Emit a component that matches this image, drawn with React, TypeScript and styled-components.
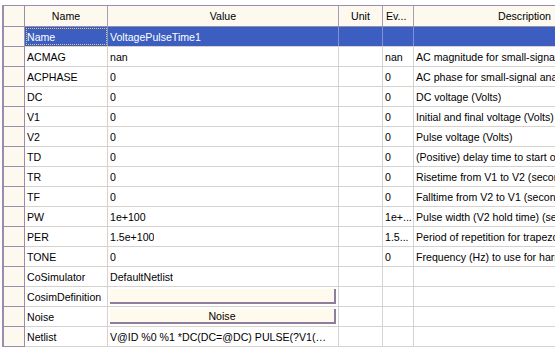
import React from 'react';
import styled, { createGlobalStyle } from 'styled-components';

const GlobalStyle = createGlobalStyle`
  html, body {
    margin: 0;
    padding: 0;
    background: #ffffff;
    overflow: hidden;
  }
  body {
    font-family: "Liberation Sans", Arial, sans-serif;
    font-size: 10.6px;
    color: #000;
  }
`;

const COLS = [83, 231, 44, 31, 222];

const StyledPage = styled.div`
  width: 555px;
  height: 356px;
  overflow: hidden;
  padding: 5px 0 0 2px;
  box-sizing: border-box;
`;

const StyledGrid = styled.div`
  border-top: 1px solid #9a8cab;
  border-left: 2px solid #9a8cab;
  width: 700px;
`;

const StyledHeaderRow = styled.div`
  display: flex;
  height: 20px;
  border-bottom: 1px solid #9a8cab;
  background: #fdf9ee;
`;

const StyledRow = styled.div<{ $selected?: boolean }>`
  display: flex;
  height: 19px;
  border-bottom: 1px solid #d6d3ce;
  background: ${(p) => (p.$selected ? '#3c5ec0' : '#ffffff')};
  color: ${(p) => (p.$selected ? '#ffffff' : '#000000')};
`;

const StyledRowHead = styled.div<{ $header?: boolean }>`
  flex: 0 0 21px;
  box-sizing: border-box;
  background: #fdf9ee;
  border-right: 1px solid #9a8cab;
  margin-bottom: ${(p) => (p.$header ? '0' : '-1px')};
  border-bottom: ${(p) => (p.$header ? 'none' : '1px solid #9a8cab')};
`;

const StyledHeadCell = styled.div<{ $w: number; $align?: string }>`
  flex: 0 0 ${(p) => p.$w}px;
  box-sizing: border-box;
  border-right: 1px solid #a89db6;
  display: flex;
  align-items: center;
  justify-content: ${(p) => p.$align || 'center'};
  padding: 0 3px;
  white-space: nowrap;
  overflow: hidden;
`;

const StyledCell = styled.div<{ $w: number; $selected?: boolean; $focus?: boolean }>`
  flex: 0 0 ${(p) => p.$w}px;
  box-sizing: border-box;
  border-right: 1px solid ${(p) => (p.$selected ? '#7f93d3' : '#d6d3ce')};
  display: flex;
  align-items: center;
  padding: 0 2px;
  white-space: nowrap;
  overflow: hidden;
  outline: ${(p) => (p.$focus ? '1px dotted #e8c860' : 'none')};
  outline-offset: -2px;
`;

const StyledText = styled.span`
  overflow: hidden;
  text-overflow: ellipsis;
  white-space: nowrap;
`;

const StyledButton = styled.div`
  flex: 1;
  height: 15px;
  margin-top: 2px;
  align-self: flex-start;
  background: #fffaee;
  border-bottom: 2px solid #8e7e9c;
  border-right: 2px solid #8e7e9c;
  box-sizing: border-box;
  display: flex;
  align-items: center;
  justify-content: center;
`;

type Row = {
  name: string;
  value?: string;
  ev?: string;
  desc?: string;
  button?: boolean;
  selected?: boolean;
};

const rows: Row[] = [
  { name: 'Name', value: 'VoltagePulseTime1', selected: true },
  { name: 'ACMAG', value: 'nan', ev: 'nan', desc: 'AC magnitude for small-signal analysis (Volts)' },
  { name: 'ACPHASE', value: '0', ev: '0', desc: 'AC phase for small-signal analysis (Degrees)' },
  { name: 'DC', value: '0', ev: '0', desc: 'DC voltage (Volts)' },
  { name: 'V1', value: '0', ev: '0', desc: 'Initial and final voltage (Volts)' },
  { name: 'V2', value: '0', ev: '0', desc: 'Pulse voltage (Volts)' },
  { name: 'TD', value: '0', ev: '0', desc: '(Positive) delay time to start of pulse (seconds)' },
  { name: 'TR', value: '0', ev: '0', desc: 'Risetime from V1 to V2 (seconds)' },
  { name: 'TF', value: '0', ev: '0', desc: 'Falltime from V2 to V1 (seconds)' },
  { name: 'PW', value: '1e+100', ev: '1e+...', desc: 'Pulse width (V2 hold time) (seconds)' },
  { name: 'PER', value: '1.5e+100', ev: '1.5...', desc: 'Period of repetition for trapezoidal pulse (seconds)' },
  { name: 'TONE', value: '0', ev: '0', desc: 'Frequency (Hz) to use for harmonic balance' },
  { name: 'CoSimulator', value: 'DefaultNetlist' },
  { name: 'CosimDefinition', value: '', button: true },
  { name: 'Noise', value: 'Noise', button: true },
  { name: 'Netlist', value: 'V@ID %0 %1 *DC(DC=@DC) PULSE(?V1(@V1) ?V2(@V2) ?TD(@TD))' },
];

export default function App() {
  return (
    <StyledPage>
      <GlobalStyle />
      <StyledGrid>
        <StyledHeaderRow>
          <StyledRowHead $header />
          <StyledHeadCell $w={COLS[0]}>Name</StyledHeadCell>
          <StyledHeadCell $w={COLS[1]}>Value</StyledHeadCell>
          <StyledHeadCell $w={COLS[2]}>Unit</StyledHeadCell>
          <StyledHeadCell $w={COLS[3]} $align="flex-start">Ev...</StyledHeadCell>
          <StyledHeadCell $w={COLS[4]}>Description</StyledHeadCell>
        </StyledHeaderRow>
        {rows.map((r) => (
          <StyledRow key={r.name} $selected={r.selected}>
            <StyledRowHead />
            <StyledCell $w={COLS[0]} $selected={r.selected} $focus={r.selected}>
              {r.name}
            </StyledCell>
            <StyledCell $w={COLS[1]} $selected={r.selected}>
              {r.button ? <StyledButton>{r.value}</StyledButton> : <StyledText>{r.value}</StyledText>}
            </StyledCell>
            <StyledCell $w={COLS[2]} $selected={r.selected} />
            <StyledCell $w={COLS[3]} $selected={r.selected}>
              {r.ev}
            </StyledCell>
            <StyledCell $w={COLS[4]} $selected={r.selected}>
              {r.desc}
            </StyledCell>
          </StyledRow>
        ))}
      </StyledGrid>
    </StyledPage>
  );
}
